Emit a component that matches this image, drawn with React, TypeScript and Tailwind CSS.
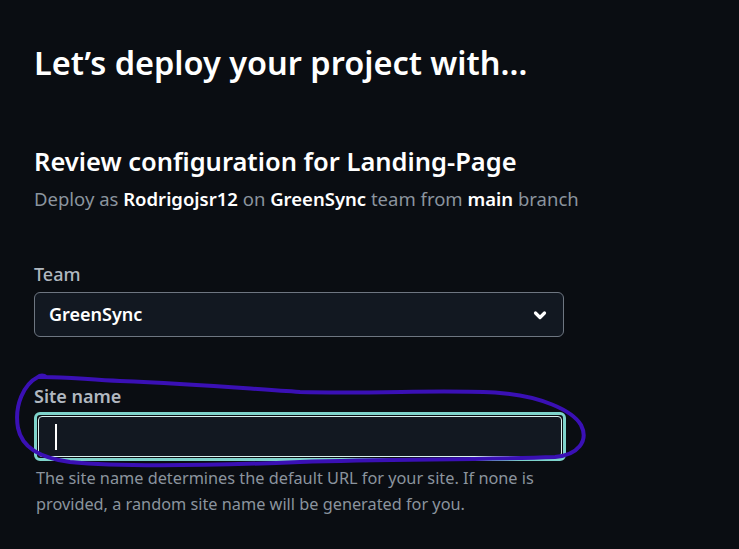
import {FC} from 'react';

const Chevron: FC = () => (
  <svg className="h-4 w-4 text-white" fill="none" stroke="currentColor" strokeLinecap="round" strokeLinejoin="round" strokeWidth={3.2} viewBox="0 0 16 16">
    <path d="M3.5 6l4.5 4.5L12.5 6" />
  </svg>
);

const Scribble: FC = () => (
  <svg className="pointer-events-none absolute inset-0 h-[549px] w-[739px]" fill="none" viewBox="0 0 739 549">
    <path
      d="M46 377 C44 375 40 375 38 377 C60 376 90 380 120 381 C200 384 250 389 300 392 C380 394 450 389 500 393 C540 396 572 410 581 425 C589 441 578 455 555 457 C480 460 400 459 300 462 C200 466 120 467 70 462 C40 458 22 448 18 428 C14 405 24 384 38 377"
      stroke="#3a10b5"
      strokeLinecap="round"
      strokeLinejoin="round"
      strokeWidth={4}
    />
  </svg>
);

const App: FC = () => {
  return (
    <div className="relative h-[549px] w-[739px] overflow-hidden bg-[#0a0d12] font-['Segoe_UI','Noto_Sans',sans-serif]">
      <div className="flex flex-col pl-[34px] pt-[40px]">
        <h1 className="text-[32.5px] font-semibold leading-[46px] text-white">Let’s deploy your project with…</h1>
        <h2 className="mt-[56px] text-[25.5px] font-semibold leading-[38px] text-white">Review configuration for Landing-Page</h2>
        <p className="mt-[5px] text-[18.5px] leading-[28px] text-[#8b949e]">
          Deploy as <span className="font-semibold text-white">Rodrigojsr12</span> on <span className="font-semibold text-white">GreenSync</span> team from{' '}
          <span className="font-semibold text-white">main</span> branch
        </p>
        <label className="mt-[48px] text-[18px] font-medium leading-[26px] text-[#b1b8c0]">Team</label>
        <div className="mt-[5px] flex h-[45px] w-[530px] items-center justify-between rounded-md border border-[#6e7681] bg-[#121821] pl-[14px] pr-[15px]">
          <span className="text-[18px] font-semibold text-white">GreenSync</span>
          <Chevron />
        </div>
        <label className="mt-[46px] text-[18px] font-semibold leading-[26px] text-[#b1b8c0]">Site name</label>
        <div className="mt-[3px] h-[49px] w-[532px] rounded-md border-[3px] border-[#7ed3cb] p-px">
          <div className="flex h-full w-full items-center rounded-[4px] border border-[#d8f2ef] bg-[#121821] pl-[16px]">
            <span className="h-[26px] w-[2px] bg-white" />
          </div>
        </div>
        <p className="mt-[4px] w-[530px] pl-[2px] text-[16.3px] leading-[26px] text-[#8b949e]">
          The site name determines the default URL for your site. If none is provided, a random site name will be generated for you.
        </p>
      </div>
      <Scribble />
    </div>
  );
};

export default App;
